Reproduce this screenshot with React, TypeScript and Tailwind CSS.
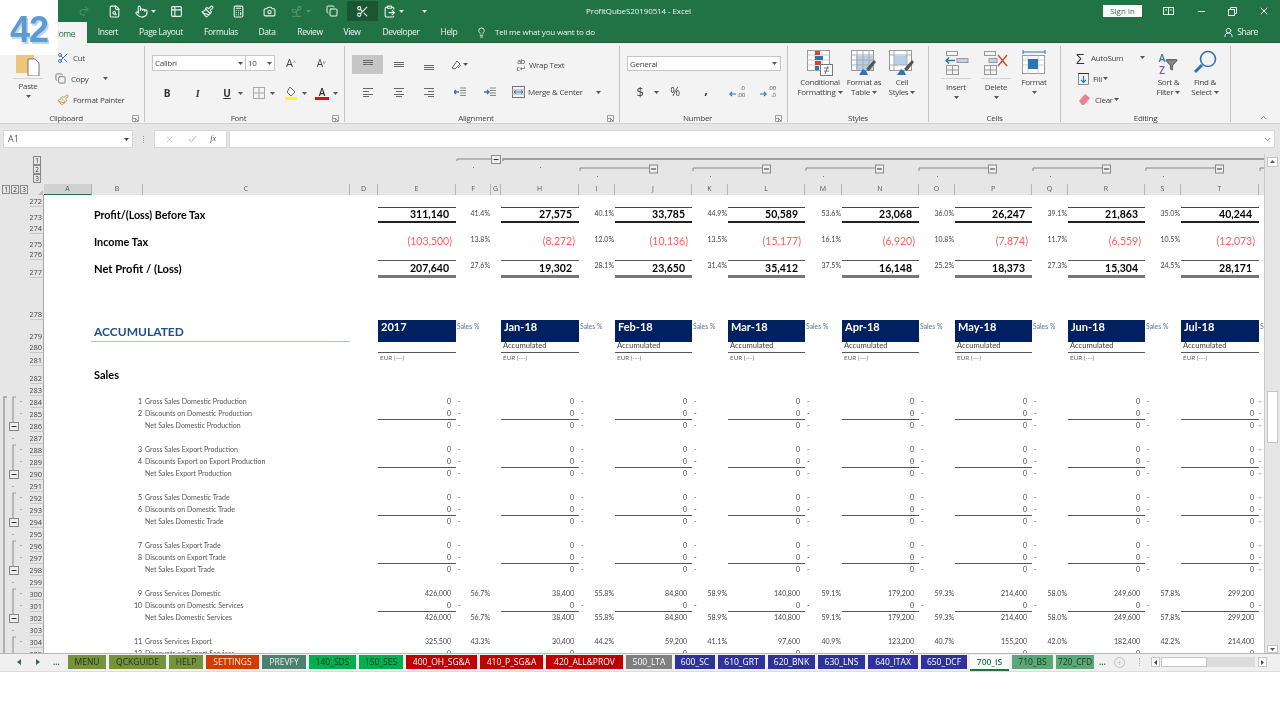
import React from "react";
import { Redo2, FileSearch, Pointer, Table2, Paintbrush, Calculator, Camera, Sprout, Copy, Scissors, ClipboardPaste, Lightbulb, UserRound, X, Minus, ChevronUp, ChevronDown, Filter } from "lucide-react";

const Caret = ({ c = "#555" }: { c?: string }) => (
  <svg width="5" height="3" viewBox="0 0 5 3" className="shrink-0"><path d="M0 0h5L2.5 3z" fill={c} /></svg>
);

const Launcher = () => (
  <svg width="7" height="7" viewBox="0 0 7 7" className="shrink-0"><path d="M.5.5h6v6h-6z M.5 3.5h3v3" fill="none" stroke="#888" strokeWidth=".8" /><path d="M3 3l3 3" stroke="#666" strokeWidth=".8" /></svg>
);

type L = [number, number, number];
const Lines = ({ d, c = "#666" }: { d: L[]; c?: string }) => (
  <svg width="14" height="12" viewBox="0 0 14 12" fill="none" stroke={c} strokeWidth="1">
    {d.map(([a, b, y], i) => <path key={i} d={`M${a} ${y}.5H${b}`} />)}
  </svg>
);

const Group = ({ w, label, launcher, children }: { w: string; label: string; launcher?: boolean; children: React.ReactNode }) => (
  <div className={`flex flex-col h-[76px] mt-[3px] border-r border-[#c6c6c6] shrink-0 ${w}`}>
    <div className="flex-1 min-h-0">{children}</div>
    <div className="flex items-center h-[12px] -mb-[2px]">
      <div className="flex-1 text-center text-[8px] leading-[12px] text-[#444]">{label}</div>
      {launcher ? <div className="w-[12px]"><Launcher /></div> : null}
    </div>
  </div>
);

const Big = ({ w, icon, a, b, line }: { w: string; icon: React.ReactNode; a: string; b?: string; line?: boolean }) => (
  <div className={`flex flex-col items-center shrink-0 ${w}`}>
    <div className="h-[26px] flex items-end justify-center mt-[1px]">{icon}</div>
    {line ? <div className="w-[30px] h-px bg-[#d4d4d4] mt-[2px] mb-[3px]" /> : <div className="h-[1px]" />}
    <div className="text-[8px] leading-[10px] text-[#444] whitespace-nowrap">{a}</div>
    {b ? <div className="text-[8px] leading-[10px] text-[#444] whitespace-nowrap flex items-center gap-[2px]">{b}<Caret /></div> : <div className="h-[10px] flex items-center"><Caret /></div>}
  </div>
);

const cols = "grid grid-cols-[14px_48px_51px_207px_28px_78px_35px_10px_78px_36px_77px_36px_77px_37px_77px_36px_77px_36px_77px_36px_78px_5px]";

const heads = ["A", "B", "C", "D", "E", "F", "G", "H", "I", "J", "K", "L", "M", "N", "O", "P", "Q", "R", "S", "T", ""];

type P = [string, string];
const total: P[] = [["311,140", "41.4%"], ["27,575", "40.1%"], ["33,785", "44.9%"], ["50,589", "53.6%"], ["23,068", "36.0%"], ["26,247", "39.1%"], ["21,863", "35.0%"], ["40,244", ""]];
const tax: P[] = [["(103,500)", "13.8%"], ["(8,272)", "12.0%"], ["(10,136)", "13.5%"], ["(15,177)", "16.1%"], ["(6,920)", "10.8%"], ["(7,874)", "11.7%"], ["(6,559)", "10.5%"], ["(12,073)", ""]];
const net: P[] = [["207,640", "27.6%"], ["19,302", "28.1%"], ["23,650", "31.4%"], ["35,412", "37.5%"], ["16,148", "25.2%"], ["18,373", "27.3%"], ["15,304", "24.5%"], ["28,171", ""]];
const months = ["2017", "Jan-18", "Feb-18", "Mar-18", "Apr-18", "May-18", "Jun-18", "Jul-18"];
const gsd: P[] = [["426,000", "56.7%"], ["38,400", "55.8%"], ["84,800", "58.9%"], ["140,800", "59.1%"], ["179,200", "59.3%"], ["214,400", "58.0%"], ["249,600", "57.8%"], ["299,200", ""]];
const gse: P[] = [["325,500", "43.3%"], ["30,400", "44.2%"], ["59,200", "41.1%"], ["97,600", "40.9%"], ["123,200", "40.7%"], ["155,200", "42.0%"], ["182,400", "42.2%"], ["214,400", ""]];
const zero: P[] = months.map(() => ["0", "-"]);

const RowNo = ({ n }: { n: number }) => (
  <div className="bg-[#e6e6e6] border-r border-b border-b-[#c8c8c8] border-r-[#a8a8a8] text-[7.5px] leading-[9px] text-[#444] text-right pr-[1px] flex items-end justify-end overflow-hidden">{n}</div>
);

const Period = ({ cellA, cellB, i }: { cellA: React.ReactNode; cellB: React.ReactNode; i: number }) => (
  <>
    {cellA}
    {cellB}
    {i === 0 ? <div /> : null}
  </>
);

const Blank = ({ n, h }: { n: number; h: string }) => (
  <div className={`${cols} ${h} bg-white`}><RowNo n={n} /></div>
);

const BigRow = ({ n, h, label, labelCls, data, valCls, pctCls }: { n: number; h: string; label: string; labelCls: string; data: P[]; valCls: string; pctCls: string }) => (
  <div className={`${cols} ${h} bg-white`}>
    <RowNo n={n} />
    <div />
    <div className={`col-span-3 pl-[2px] flex items-center whitespace-nowrap text-black font-bold font-['Lato',sans-serif] ${labelCls}`}>{label}</div>
    {data.map((p, i) => (
      <Period key={i} i={i}
        cellA={<div className={`flex items-center justify-end whitespace-nowrap overflow-hidden font-['Lato',sans-serif] ${valCls}`}>{p[0]}</div>}
        cellB={<div className={`flex items-start justify-end pr-[1px] whitespace-nowrap text-[7px] leading-[10px] text-[#444] font-['Lato',sans-serif] ${pctCls}`}>{p[1]}</div>} />
    ))}
  </div>
);

const DataRow = ({ n, no, label, data, line }: { n: number; no?: string; label: string; data: P[]; line?: boolean }) => (
  <div className={`${cols} h-[12px] bg-white`}>
    <RowNo n={n} />
    <div />
    <div className="text-right pr-[1px] text-[7px] leading-[10px] text-[#444] font-['Lato',sans-serif]">{no}</div>
    <div className="col-span-2 pl-[2px] text-[7px] leading-[10px] text-[#555] whitespace-nowrap font-['Lato',sans-serif]">{label}</div>
    {data.map((p, i) => {
      const dash = p[1] === "-";
      return (
        <Period key={i} i={i}
          cellA={<div className={`text-right pr-[5px] text-[7px] leading-[10px] text-[#444] font-['Lato',sans-serif] ${line ? "border-b border-[#555]" : ""}`}>{p[0]}</div>}
          cellB={i === 7 ? <div className="text-[7px] leading-[10px] text-[#444]">{dash ? "-" : ""}</div> : <div className={`text-[7px] leading-[10px] text-[#444] font-['Lato',sans-serif] whitespace-nowrap ${dash ? "text-left pl-[2px]" : "text-right pr-[1px]"}`}>{p[1]}</div>} />
      );
    })}
  </div>
);

const groups = [397, 445, 493, 541, 589, 637];
const RowOutline = () => (
  <svg width="30" height="458" viewBox="0 195 30 458" className="shrink-0" fill="none">
    <path d="M7 397H4V653" stroke="#999" strokeWidth="1.4" />
    {groups.map((y) => (
      <g key={y}>
        <path d={y < 600 ? `M16 ${y}H13V${y + 25}` : `M16 ${y}H13V653`} stroke="#999" strokeWidth="1.2" />
        {y < 600 ? <><rect x="9.5" y={y + 25.5} width="9" height="8" fill="#eee" stroke="#888" /><path d={`M11.5 ${y + 29.5}h5`} stroke="#333" /></> : null}
        <rect x="20.5" y={y + 4} width="1" height="1" fill="#777" />
        {y < 600 ? <rect x="20.5" y={y + 16} width="1" height="1" fill="#777" /> : null}
        {y < 600 ? <rect x="12.5" y={y + 41} width="1" height="1" fill="#777" /> : null}
      </g>
    ))}
  </svg>
);

const lvl2: [number, number][] = [[580, 649], [693, 762], [806, 875], [919, 988], [1033, 1102], [1146, 1215]];
const dots3 = [597, 710, 823, 937, 1050, 1163];
const ColOutline = () => (
  <svg width="1220" height="30" viewBox="44 154 1220 30" className="shrink-0" fill="none">
    <path d="M457 161V159H491" stroke="#888" />
    <rect x="491.5" y="155.5" width="9" height="8" fill="#eee" stroke="#888" />
    <path d="M493.5 159.5h5" stroke="#333" />
    <path d="M503 161V159H1264" stroke="#888" strokeWidth="1.3" />
    <rect x="473" y="167" width="1" height="1" fill="#777" />
    <rect x="540" y="167" width="1" height="1" fill="#777" />
    {lvl2.map(([a, b]) => (
      <g key={a}>
        <path d={`M${a} 171V168H${b}`} stroke="#888" />
        <rect x={b + 0.5} y="165" width="8" height="8" fill="#eee" stroke="#888" />
        <path d={`M${b + 2} 169h5`} stroke="#333" />
      </g>
    ))}
    <path d="M1260 171V168H1264" stroke="#888" />
    {dots3.map((x) => <rect key={x} x={x} y="176" width="1" height="1" fill="#777" />)}
  </svg>
);

const SheetTab = ({ label, cls }: { label: string; cls: string }) => (
  <div className={`h-[14px] flex items-center justify-center text-[8.5px] leading-[14px] whitespace-nowrap overflow-hidden shrink-0 ${cls}`}>{label}</div>
);

const QA = ({ children, active }: { children: React.ReactNode; active?: boolean }) => (
  <div className={`w-[31px] h-[20px] flex items-center justify-center gap-[3px] shrink-0 ${active ? "bg-[#1a5632]" : ""}`}>{children}</div>
);

const LvlBtn = ({ t }: { t: string }) => (
  <div className="w-[8px] h-[9px] border border-[#888] bg-[#e6e6e6] text-[6.5px] leading-[7px] text-center text-[#333]">{t}</div>
);

const DecIcon = ({ top, bottom, dir }: { top: string; bottom: string; dir: "in" | "out" }) => (
  <div className="w-[26px] flex items-center justify-center gap-px">
    <svg width="7" height="6" viewBox="0 0 8 6" className="mt-[4px]" fill="none" stroke="#2e75b6" strokeWidth="1.3">
      {dir === "in" ? <path d="M8 3H1M3.5 .5L1 3l2.5 2.5" /> : <path d="M0 3h7M4.5 .5L7 3 4.5 5.5" />}
    </svg>
    <div className="text-[6px] leading-[7px] text-[#555] text-right">{top}<br />{bottom}</div>
  </div>
);

export default function App() {
  return (
    <div className="relative w-[1280px] h-[720px] bg-white overflow-hidden font-['Open_Sans',sans-serif] blur-[0.35px]">
      {/* title bar */}
      <div className="grid grid-cols-[1fr_auto_1fr] items-center h-[22px] bg-[#217346] text-[#f0f5f1]">
        <div className="flex items-center pl-[68px]">
          <QA><Redo2 size={12} className="text-[#4f9470]" /></QA>
          <QA><FileSearch size={13} /></QA>
          <QA><Pointer size={13} /><Caret c="#e6f0ea" /></QA>
          <QA><Table2 size={13} /></QA>
          <QA><Paintbrush size={13} /></QA>
          <QA><Calculator size={13} /></QA>
          <QA><Camera size={13} /></QA>
          <QA><Sprout size={13} className="text-[#4f9470]" /><Caret c="#4f9470" /></QA>
          <QA><Copy size={12} /></QA>
          <QA active><Scissors size={13} /></QA>
          <QA><ClipboardPaste size={13} /><Caret c="#e6f0ea" /></QA>
          <QA><Caret c="#e6f0ea" /></QA>
        </div>
        <div className="text-[8px] leading-[22px] whitespace-nowrap pr-[3px] tracking-[-0.1px]">ProfitQubeS20190514  -  Excel</div>
        <div className="flex items-center justify-end">
          <div className="w-[39px] h-[12px] bg-white text-[#217346] text-[8px] leading-[12px] text-center">Sign in</div>
          <svg width="11" height="8" viewBox="0 0 11 8" className="ml-[21px]" fill="none" stroke="#e6f0ea"><rect x=".5" y=".5" width="10" height="7" /><path d="M5.5 1v6M2 3h2M7 3h2" /></svg>
          <Minus size={11} className="ml-[22px]" />
          <svg width="9" height="9" viewBox="0 0 9 9" className="ml-[21px]" fill="none" stroke="#e6f0ea"><path d="M2.5 2V.5h6v6H7" /><rect x=".5" y="2.5" width="6" height="6" /></svg>
          <X size={12} className="ml-[21px] mr-[10px]" />
        </div>
      </div>
      {/* tabs */}
      <div className="flex items-center h-[21px] bg-[#217346] border-b border-[#1c643c] text-[#eef4f0] text-[8.5px] tracking-[-0.4px]">
        <div className="ml-[41px] w-[46px] h-[21px] bg-[#f3f3f3] text-[#217346] text-center leading-[23px]">Home</div>
        <div className="w-[42px] text-center">Insert</div>
        <div className="w-[64px] text-center">Page Layout</div>
        <div className="w-[56px] text-center">Formulas</div>
        <div className="w-[36px] text-center">Data</div>
        <div className="w-[50px] text-center">Review</div>
        <div className="w-[34px] text-center">View</div>
        <div className="w-[64px] text-center">Developer</div>
        <div className="w-[32px] text-center">Help</div>
        <Lightbulb size={11} className="ml-[11px]" />
        <div className="ml-[8px] text-[8px] tracking-[-0.2px]">Tell me what you want to do</div>
        <div className="flex-1" />
        <UserRound size={11} />
        <div className="ml-[3px] mr-[22px]">Share</div>
      </div>
      {/* ribbon */}
      <div className="flex h-[81px] bg-[#f3f3f3] border-b border-[#d2d2d2] text-[#444] tracking-[-0.3px]">
        <Group w="w-[145px]" label="Clipboard" launcher>
          <div className="flex">
            <div className="w-[56px] flex flex-col items-center">
              <svg width="26" height="27" viewBox="0 0 26 27" className="mt-[3px]"><rect x="1" y="0" width="18" height="24" fill="#edc67b" /><path d="M13 10h7l4 4v13H13z" fill="#fff" stroke="#777" /></svg>
              <div className="w-[30px] h-px bg-[#d4d4d4] mt-[2px]" />
              <div className="text-[8px] leading-[10px] mt-[2px]">Paste</div>
              <div className="mt-[4px]"><Caret /></div>
            </div>
            <div className="text-[8px] leading-[21px] whitespace-nowrap">
              <div className="flex items-center h-[21px] mt-[1px]"><Scissors size={12} className="text-[#4a7ab5] ml-[1px]" /><span className="ml-[4px]">Cut</span></div>
              <div className="flex items-center h-[21px]"><Copy size={11} className="text-[#777] -ml-[1px]" /><span className="ml-[5px]">Copy</span><span className="ml-[14px]"><Caret /></span></div>
              <div className="flex items-center h-[21px]"><Paintbrush size={12} className="text-[#c99a4d] ml-[1px]" /><span className="ml-[4px]">Format Painter</span></div>
            </div>
          </div>
        </Group>
        <Group w="w-[200px]" label="Font" launcher>
          <div className="flex items-center pl-[7px] mt-[9px]">
            <div className="w-[94px] h-[16px] bg-white border border-[#c6c6c6] flex items-center justify-between px-[2px] text-[8px]">Calibri<Caret /></div>
            <div className="w-[29px] h-[16px] bg-white border border-l-0 border-[#c6c6c6] flex items-center justify-between px-[2px] text-[8px]">10<Caret /></div>
            <div className="ml-[1px] w-[30px] text-center text-[11px] leading-[14px]">A<sup className="text-[6px] text-[#4a7ab5]">^</sup></div>
            <div className="w-[30px] text-center text-[10px] leading-[14px]">A<sup className="text-[6px] text-[#4a7ab5]">v</sup></div>
          </div>
          <div className="flex items-center pl-[7px] mt-[14px] h-[16px] text-[10px] text-[#333]">
            <div className="w-[30px] text-center font-bold">B</div>
            <div className="w-[31px] text-center italic font-['Liberation_Serif',serif] font-bold">I</div>
            <div className="ml-[9px] w-[10px] text-center font-bold underline">U</div>
            <div className="ml-[6px]"><Caret /></div>
            <svg width="12" height="12" viewBox="0 0 12 12" className="ml-[10px] shrink-0" fill="none" stroke="#aaa"><rect x=".5" y=".5" width="11" height="11" /><path d="M6 0v12M0 6h12" /></svg>
            <div className="ml-[5px]"><Caret /></div>
            <svg width="12" height="14" viewBox="0 0 12 14" className="ml-[10px] shrink-0"><path d="M5 1l5 5-4 4-4-4z" fill="#fff" stroke="#666" /><rect x="0" y="11" width="12" height="3" fill="#ffff00" /></svg>
            <div className="ml-[5px]"><Caret /></div>
            <div className="ml-[8px] w-[14px] flex flex-col items-center text-[10px] leading-[10px] font-semibold">A<div className="w-[14px] h-[3px] bg-[#ff0000]" /></div>
            <div className="ml-[4px]"><Caret /></div>
          </div>
        </Group>
        <Group w="w-[275px]" label="Alignment" launcher>
          <div className="flex items-center pl-[7px] mt-[9px] h-[19px] text-[8px]">
            <div className="w-[31px] h-[19px] bg-[#c6c6c6] flex items-center justify-center"><Lines d={[[2, 12, 1], [2, 12, 3], [2, 12, 5]]} /></div>
            <div className="w-[31px] flex justify-center"><Lines d={[[2, 12, 3], [2, 12, 5], [2, 12, 7]]} /></div>
            <div className="w-[30px] flex justify-center"><Lines d={[[2, 12, 6], [2, 12, 8], [2, 12, 10]]} /></div>
            <div className="w-[31px] flex items-center justify-center gap-[1px]">
              <svg width="11" height="10" viewBox="0 0 11 10" fill="none" stroke="#666"><path d="M1 8l5-7 3 3-5 5zM7 8l3-3" /></svg><Caret />
            </div>
            <div className="ml-[40px] w-[12px] text-[7px] leading-[7px] text-center text-[#444]">ab<br />c↵</div>
            <div className="ml-[2px] whitespace-nowrap">Wrap Text</div>
          </div>
          <div className="flex items-center pl-[7px] mt-[10px] h-[16px] text-[8px]">
            <div className="w-[31px] flex justify-center"><Lines d={[[2, 12, 2], [2, 8, 5], [2, 12, 8], [2, 8, 10]]} /></div>
            <div className="w-[31px] flex justify-center"><Lines d={[[2, 12, 2], [4, 10, 5], [2, 12, 8], [4, 10, 10]]} /></div>
            <div className="w-[30px] flex justify-center"><Lines d={[[2, 12, 2], [6, 12, 5], [2, 12, 8], [6, 12, 10]]} /></div>
            <svg width="12" height="10" viewBox="0 0 12 10" className="ml-[10px] shrink-0" fill="none"><path d="M6 1h6M6 3.5h6M6 6h6M6 8.5h6" stroke="#888" /><path d="M0 5h5M2 3L0 5l2 2" stroke="#2e75b6" strokeWidth="1.3" /></svg>
            <svg width="12" height="10" viewBox="0 0 12 10" className="ml-[18px] shrink-0" fill="none"><path d="M6 1h6M6 3.5h6M6 6h6M6 8.5h6" stroke="#888" /><path d="M0 5h5M3 3l2 2-2 2" stroke="#2e75b6" strokeWidth="1.3" /></svg>
            <svg width="13" height="12" viewBox="0 0 13 12" className="ml-[16px] shrink-0" fill="none"><rect x=".5" y=".5" width="12" height="11" stroke="#777" /><path d="M0 4h13M0 8h13" stroke="#aaa" /><path d="M2 6h9M4 4.5L2 6l2 1.5M9 4.5L11 6 9 7.5" stroke="#2e75b6" /></svg>
            <div className="ml-[3px] w-[68px] whitespace-nowrap">Merge &amp; Center</div>
            <Caret />
          </div>
        </Group>
        <Group w="w-[168px]" label="Number" launcher>
          <div className="pl-[7px] mt-[10px]">
            <div className="w-[154px] h-[15px] bg-white border border-[#c6c6c6] flex items-center justify-between px-[2px] pr-[3px] text-[8px]">General<Caret /></div>
          </div>
          <div className="flex items-center pl-[7px] mt-[13px] h-[16px]">
            <div className="w-[26px] text-center text-[13px] leading-[16px] text-[#444]">$</div>
            <div className="ml-[1px]"><Caret /></div>
            <div className="ml-[3px] w-[26px] text-center text-[12px] leading-[16px]">%</div>
            <div className="ml-[5px] w-[26px] h-[16px] text-center text-[13px] leading-[10px] font-bold">,</div>
            <div className="ml-[5px]"><DecIcon top=".0" bottom=".00" dir="in" /></div>
            <div className="ml-[5px]"><DecIcon top=".00" bottom=".0" dir="out" /></div>
          </div>
        </Group>
        <Group w="w-[141px]" label="Styles">
          <div className="flex pl-[9px] pt-[3px]">
            <Big w="w-[46px]" a="Conditional" b="Formatting" icon={
              <svg width="26" height="26" viewBox="0 0 26 26"><rect x=".5" y=".5" width="22" height="20" fill="#fff" stroke="#999" /><path d="M8 .5v20M15 .5v20M.5 5h22M.5 10h22M.5 15h22" stroke="#ccc" /><rect x="8" y="1" width="5" height="4" fill="#d24726" /><rect x="8" y="6" width="8" height="4" fill="#2e75b6" /><rect x="8" y="11" width="6" height="4" fill="#d24726" /><rect x="8" y="16" width="4" height="4" fill="#2e75b6" /><rect x="13.5" y="14.5" width="12" height="11" fill="#fff" stroke="#777" /><path d="M17 18h5M17 21h5M21 16l-3 8" stroke="#555" strokeWidth=".8" /></svg>} />
            <Big w="w-[42px]" a="Format as" b="Table" icon={
              <svg width="26" height="26" viewBox="0 0 26 26"><rect x=".5" y=".5" width="22" height="20" fill="#fff" stroke="#999" /><rect x="5" y="6" width="17" height="14" fill="#b7cde8" /><path d="M6 .5v20M12 .5v20M18 .5v20M.5 5h22M.5 10h22M.5 15h22" stroke="#aaa" /><path d="M8 25l4-6 3 2 2 4z" fill="#2e75b6" /><path d="M15 19l8-9 2 2-7 9z" fill="#555" /></svg>} />
            <Big w="w-[34px]" a="Cell" b="Styles" icon={
              <svg width="26" height="26" viewBox="0 0 26 26"><rect x=".5" y=".5" width="22" height="20" fill="#fff" stroke="#999" /><rect x="5" y="6" width="13" height="9" fill="#b7cde8" /><path d="M.5 5h22M.5 15h22M5 .5v20M18 .5v20" stroke="#aaa" /><path d="M8 25l4-6 3 2 2 4z" fill="#2e75b6" /><path d="M15 19l8-9 2 2-7 9z" fill="#555" /></svg>} />
          </div>
        </Group>
        <Group w="w-[132px]" label="Cells">
          <div className="flex pl-[7px] pt-[3px]">
            <Big w="w-[40px]" a="Insert" line icon={
              <svg width="25" height="25" viewBox="0 0 25 25" fill="none"><rect x="2.5" y=".5" width="11" height="4" stroke="#999" /><rect x="2.5" y="14.5" width="12" height="9" stroke="#999" /><path d="M2.5 19h12M8.5 14.5v9" stroke="#999" /><rect x="13" y="7.5" width="11" height="4" fill="#bcd3ea" stroke="#999" /><path d="M11 9.5H2M5 6.5l-3 3 3 3" stroke="#2e75b6" strokeWidth="1.5" /></svg>} />
            <Big w="w-[40px]" a="Delete" line icon={
              <svg width="25" height="25" viewBox="0 0 25 25" fill="none"><rect x=".5" y=".5" width="11" height="4" stroke="#999" /><rect x=".5" y="14.5" width="12" height="9" stroke="#999" /><path d="M.5 19h12M6.5 14.5v9" stroke="#999" /><rect x="5" y="7.5" width="8" height="4" fill="#bcd3ea" stroke="#999" /><path d="M14 4l9 11M23 4l-9 11" stroke="#d24726" strokeWidth="1.3" /></svg>} />
            <Big w="w-[36px]" a="Format" icon={
              <svg width="24" height="26" viewBox="0 0 24 26" fill="none"><path d="M1 2h22M1 0v4M23 0v4" stroke="#2e75b6" /><rect x=".5" y="5.5" width="22" height="18" fill="#fff" stroke="#999" /><path d="M.5 10h22M.5 15h22M6 5.5v18M16 5.5v18" stroke="#ccc" /><rect x="6" y="9" width="10" height="10" fill="#2e75b6" /></svg>} />
          </div>
        </Group>
        <Group w="w-[170px]" label="Editing">
          <div className="flex">
            <div className="w-[90px] text-[8px] shrink-0">
              <div className="flex items-center h-[21px] mt-[1px] pl-[15px]"><span className="w-[11px] text-[15px] leading-[14px] text-[#333]">Σ</span><span className="ml-[4px] w-[49px]">AutoSum</span><Caret /></div>
              <div className="flex items-center h-[21px] pl-[17px]"><svg width="11" height="12" viewBox="0 0 11 12" fill="none"><path d="M.5.5h10v11H.5z" stroke="#888" /><path d="M0 .5h11" stroke="#333" /><path d="M5.5 3v6M3 7l2.5 2.5L8 7" stroke="#2e75b6" strokeWidth="1.2" /></svg><span className="ml-[4px] mr-[1px]">Fill</span><Caret /></div>
              <div className="flex items-center h-[21px] pl-[18px]"><svg width="11" height="11" viewBox="0 0 11 11"><path d="M0 7l6-7 5 4-6 7H3z" fill="#ee7f8d" /></svg><span className="ml-[5px] mr-[1px]">Clear</span><Caret /></div>
            </div>
            <div className="pt-[3px] flex">
              <Big w="w-[35px]" a="Sort &" b="Filter" icon={
                <div className="flex items-center">
                  <div className="text-[10px] leading-[12px] font-semibold text-center"><div className="text-[#2e75b6]">A</div><div className="text-[#7a4fb0]">Z</div></div>
                  <Filter size={13} className="text-[#666] fill-[#888]" />
                </div>} />
              <Big w="w-[38px]" a="Find &" b="Select" icon={
                <svg width="24" height="26" viewBox="0 0 24 26" fill="none"><circle cx="15" cy="9" r="7.5" stroke="#2e75b6" strokeWidth="1.6" /><path d="M9 15l-7 7" stroke="#2e75b6" strokeWidth="3" /></svg>} />
            </div>
          </div>
        </Group>
        <div className="flex-1 flex items-end justify-end pr-[12px] pb-[1px]"><ChevronUp size={9} className="text-[#555]" /></div>
      </div>
      {/* formula bar */}
      <div className="flex items-start h-[30px] bg-[#e6e6e6] pt-[6px] text-[#555]">
        <div className="ml-[3px] w-[130px] h-[18px] bg-white border border-[#d6d6d6] flex items-center justify-between pl-[4px] pr-[3px] text-[9px]">A1<Caret c="#444" /></div>
        <div className="w-[21px] h-[18px] flex items-center justify-center"><div className="h-[7px] border-l border-dotted border-[#999]" /></div>
        <div className="w-[73px] h-[18px] bg-white border border-[#d6d6d6] flex items-center justify-around px-[3px]">
          <X size={9} className="text-[#bbb]" />
          <svg width="9" height="8" viewBox="0 0 9 8" fill="none" stroke="#bbb"><path d="M1 4l2.5 3L8 1" /></svg>
          <span className="text-[8px] italic font-['Liberation_Serif',serif] text-[#555]">fx</span>
        </div>
        <div className="ml-[2px] w-[1046px] h-[18px] bg-white border border-[#d6d6d6] flex items-center justify-end pr-[2px]"><ChevronDown size={9} className="text-[#555]" /></div>
      </div>
      {/* sheet area */}
      <div className="flex h-[499px] bg-[#e6e6e6]">
        <div className="w-[1264px] flex flex-col shrink-0">
          <div className="flex h-[30px]">
            <div className="w-[44px] flex flex-col items-end pr-[3px] pt-[2px] shrink-0"><LvlBtn t="1" /><LvlBtn t="2" /><LvlBtn t="3" /></div>
            <ColOutline />
          </div>
          <div className="flex h-[11px]">
            <div className="w-[30px] flex items-center pl-[2px] gap-px shrink-0">
              <LvlBtn t="1" /><LvlBtn t="2" /><LvlBtn t="3" />
            </div>
            <div className={`${cols} h-[11px] w-[1234px]`}>
              <div className="flex items-end justify-end pr-[1px] pb-[1px]">
                <svg width="5" height="5" viewBox="0 0 5 5"><path d="M5 0v5H0z" fill="#bbb" /></svg>
              </div>
              {heads.map((h, i) => (
                <div key={i} className={`text-center text-[7px] leading-[10px] text-[#555] ${i < 20 ? "border-r border-[#b5b5b5]" : ""} ${i === 0 ? "bg-[#d2d2d2] border-b-2 border-b-[#217346] text-[#217346]" : "border-b border-b-[#b5b5b5]"}`}>{h}</div>
              ))}
            </div>
          </div>
          <div className="flex h-[458px] overflow-hidden">
            <RowOutline />
            <div className="w-[1234px] bg-white">
              <Blank n={272} h="h-[12px]" />
              <BigRow n={273} h="h-[14px]" label="Profit/(Loss) Before Tax" labelCls="text-[10.7px]" data={total} valCls="text-[10.5px] font-bold text-black pr-[7px] border-t border-b-2 border-t-[#444] border-b-[#222]" pctCls="pt-[1px]" />
              <Blank n={274} h="h-[13px]" />
              <BigRow n={275} h="h-[14px]" label="Income Tax" labelCls="text-[10.8px]" data={tax} valCls="text-[10.5px] text-[#ff5b5b] pr-[4px]" pctCls="" />
              <Blank n={276} h="h-[12px]" />
              <BigRow n={277} h="h-[18px]" label="Net Profit / (Loss)" labelCls="text-[11.2px]" data={net} valCls="text-[10.5px] font-bold text-black pr-[7px] border-t border-b-[3px] border-t-[#555] border-b-[#777] items-start" pctCls="" />
              <Blank n={278} h="h-[42px]" />
              <div className={`${cols} h-[20px] bg-white`}>
                <RowNo n={279} />
                <div />
                <div className="col-span-2 -ml-[1px] pl-[3px] pt-[3px] border-b border-[#a7c1e0] flex items-center text-[12px] font-bold text-[#1f4e8c] font-['Lato',sans-serif] whitespace-nowrap">ACCUMULATED</div>
                <div />
                {months.map((m, i) => (
                  <Period key={m} i={i}
                    cellA={<div className="bg-[#002060] text-white font-bold text-[11px] leading-[14px] pl-[3px] font-['Lato',sans-serif]">{m}</div>}
                    cellB={<div className="text-[6.8px] leading-[12px] pl-[1px] text-[#5b739b] whitespace-nowrap overflow-hidden font-['Lato',sans-serif]">Sales %</div>} />
                ))}
              </div>
              <div className={`${cols} h-[13px] bg-white`}>
                <RowNo n={280} />
                <div className="col-span-4" />
                {months.map((m, i) => (
                  <Period key={m} i={i}
                    cellA={<div className="border-b border-[#555] text-[7.6px] leading-[10px] pl-[2px] text-[#444] font-['Lato',sans-serif]">{i === 0 ? "" : "Accumulated"}</div>}
                    cellB={<div />} />
                ))}
              </div>
              <div className={`${cols} h-[13px] bg-white`}>
                <RowNo n={281} />
                <div className="col-span-4" />
                {months.map((m, i) => (
                  <Period key={m} i={i}
                    cellA={<div className="text-[6.3px] leading-[10px] pl-[2px] text-[#666] font-['Lato',sans-serif]">EUR (---)</div>}
                    cellB={<div />} />
                ))}
              </div>
              <div className={`${cols} h-[18px] bg-white`}>
                <RowNo n={282} />
                <div />
                <div className="col-span-3 pl-[2px] flex items-center text-[11px] font-bold text-black font-['Lato',sans-serif]">Sales</div>
              </div>
              <Blank n={283} h="h-[12px]" />
              <DataRow n={284} no="1" label="Gross Sales Domestic Production" data={zero} />
              <DataRow n={285} no="2" label="Discounts on Domestic Production" data={zero} line />
              <DataRow n={286} label="Net Sales Domestic Production" data={zero} />
              <Blank n={287} h="h-[12px]" />
              <DataRow n={288} no="3" label="Gross Sales Export Production" data={zero} />
              <DataRow n={289} no="4" label="Discounts Export on Export Production" data={zero} line />
              <DataRow n={290} label="Net Sales Export Production" data={zero} />
              <Blank n={291} h="h-[12px]" />
              <DataRow n={292} no="5" label="Gross Sales Domestic Trade" data={zero} />
              <DataRow n={293} no="6" label="Discounts on Domestic Trade" data={zero} line />
              <DataRow n={294} label="Net Sales Domestic Trade" data={zero} />
              <Blank n={295} h="h-[12px]" />
              <DataRow n={296} no="7" label="Gross Sales Export Trade" data={zero} />
              <DataRow n={297} no="8" label="Discounts on Export Trade" data={zero} line />
              <DataRow n={298} label="Net Sales Export Trade" data={zero} />
              <Blank n={299} h="h-[12px]" />
              <DataRow n={300} no="9" label="Gross Services Domestic" data={gsd} />
              <DataRow n={301} no="10" label="Discounts on Domestic Services" data={zero} line />
              <DataRow n={302} label="Net Sales Domestic Services" data={gsd} />
              <Blank n={303} h="h-[12px]" />
              <DataRow n={304} no="11" label="Gross Services Export" data={gse} />
              <DataRow n={305} no="12" label="Discounts on Export Services" data={zero} />
            </div>
          </div>
        </div>
        {/* vertical scrollbar */}
        <div className="w-[16px] flex flex-col items-center border-l border-[#c8c8c8] pt-[3px]">
          <div className="w-[11px] h-[10px] bg-white border border-[#c6c6c6] flex items-center justify-center rotate-180"><Caret /></div>
          <div className="h-[224px]" />
          <div className="w-[11px] h-[52px] bg-white border border-[#c6c6c6]" />
          <div className="flex-1" />
          <div className="w-[11px] h-[8px] bg-white border border-[#c6c6c6] flex items-center justify-center"><Caret /></div>
        </div>
      </div>
      {/* sheet tabs */}
      <div className="flex h-[19px] bg-[#f0f0f0] border-t border-b border-t-[#b8b8b8] border-b-[#dcdcdc] pt-[1px] text-[#555]">
        <div className="w-[68px] flex items-center shrink-0 h-[14px]">
          <svg width="4" height="6" viewBox="0 0 4 6" className="ml-[17px]"><path d="M4 0v6L0 3z" fill="#217346" /></svg>
          <svg width="4" height="6" viewBox="0 0 4 6" className="ml-[15px]"><path d="M0 0v6l4-3z" fill="#217346" /></svg>
          <span className="ml-[13px] text-[8px] font-bold text-[#217346]">...</span>
        </div>
        <div className="flex gap-[3px] font-['Open_Sans',sans-serif]">
          <SheetTab label="MENU" cls="w-[38px] bg-[#76923c] text-[#2a3315]" />
          <SheetTab label="QCKGUIDE" cls="w-[57px] bg-[#76923c] text-[#2a3315]" />
          <SheetTab label="HELP" cls="w-[34px] bg-[#76923c] text-[#2a3315]" />
          <SheetTab label="SETTINGS" cls="w-[53px] bg-[#d03b00] text-[#fbe6dc]" />
          <SheetTab label="PREVFY" cls="w-[44px] bg-[#4e8070] text-[#e6f0ec]" />
          <SheetTab label="140_SDS" cls="w-[47px] bg-[#00b050] text-[#06351c]" />
          <SheetTab label="150_SES" cls="w-[44px] bg-[#00b050] text-[#06351c]" />
          <SheetTab label="400_OH_SG&A" cls="w-[71px] bg-[#c00000] text-white" />
          <SheetTab label="410_P_SG&A" cls="w-[63px] bg-[#c00000] text-white" />
          <SheetTab label="420_ALL&PROV" cls="w-[77px] bg-[#c00000] text-white" />
          <SheetTab label="500_LTA" cls="w-[46px] bg-[#7f7f7f] text-white" />
          <SheetTab label="600_SC" cls="w-[40px] bg-[#2f3299] text-white" />
          <SheetTab label="610_GRT" cls="w-[47px] bg-[#2f3299] text-white" />
          <SheetTab label="620_BNK" cls="w-[47px] bg-[#2f3299] text-white" />
          <SheetTab label="630_LNS" cls="w-[47px] bg-[#2f3299] text-white" />
          <SheetTab label="640_ITAX" cls="w-[50px] bg-[#2f3299] text-white" />
          <SheetTab label="650_DCF" cls="w-[46px] bg-[#2f3299] text-white" />
          <SheetTab label="700_IS" cls="w-[39px] h-[16px] bg-white text-[#217346] font-semibold border-b-2 border-[#217346]" />
          <SheetTab label="710_BS" cls="w-[41px] bg-[#5aa878] text-[#14381f]" />
          <SheetTab label="720_CFD" cls="w-[38px] bg-[#5aa878] text-[#14381f]" />
        </div>
        <div className="flex items-center h-[14px]">
          <span className="ml-[5px] text-[8px] font-bold text-[#217346]">...</span>
          <div className="ml-[8px] w-[11px] h-[11px] rounded-full border border-[#c0c0c0] text-[9px] leading-[9px] text-center text-[#bbb]">+</div>
          <div className="ml-[14px] h-[8px] border-l border-dotted border-[#aaa]" />
          <div className="ml-[11px] w-[9px] h-[10px] bg-white border border-[#c6c6c6] flex items-center justify-center"><svg width="3" height="5" viewBox="0 0 3 5"><path d="M3 0v5L0 2.5z" fill="#444" /></svg></div>
          <div className="ml-[1px] w-[46px] h-[10px] bg-white border border-[#c6c6c6]" />
          <div className="w-[48px] h-[10px] bg-[#dcdcdc]" />
          <div className="ml-[3px] w-[9px] h-[10px] bg-white border border-[#c6c6c6] flex items-center justify-center"><svg width="3" height="5" viewBox="0 0 3 5"><path d="M0 0v5l3-2.5z" fill="#444" /></svg></div>
        </div>
      </div>
      {/* logo overlay */}
      <div className="absolute top-0 left-0 w-[58px] h-[55px] bg-white flex items-center justify-center pt-[4px] font-['Liberation_Sans',sans-serif] font-bold text-[36px] leading-none text-[#5b9bd5] [text-shadow:1.5px_1.5px_0_#b9d5ef] tracking-[-1px]">42</div>
    </div>
  );
}
